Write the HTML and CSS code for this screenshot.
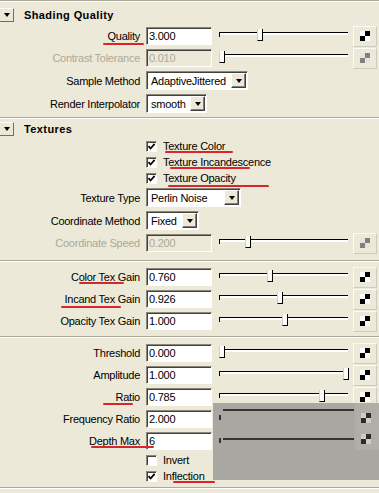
FILE: index.html
```html
<!DOCTYPE html>
<html lang="en">
<head>
    <meta charset="UTF-8">
    <title>Shading Quality</title>
    <link rel="stylesheet" href="styles.css">
</head>
<body>

<div class="panel">
    <div class="sep"></div>

    <!-- Shading Quality -->
    <section class="sec sec-1">
        <div class="head"><span class="toggle"></span><span class="title">Shading Quality</span></div>
        <div class="row">
            <span class="lbl">Quality</span>
            <span class="field">3.000</span>
            <div class="slider"><i class="thumb" style="left:38px"></i></div>
            <span class="map"></span>
        </div>
        <div class="row off">
            <span class="lbl">Contrast Tolerance</span>
            <span class="field">0.010</span>
            <div class="slider"><i class="thumb" style="left:0px"></i></div>
            <span class="map"></span>
        </div>
        <div class="row row-drop">
            <span class="lbl">Sample Method</span>
            <span class="drop drop-sample"><span class="val">AdaptiveJittered</span><span class="arrow"></span></span>
        </div>
        <div class="row row-drop">
            <span class="lbl">Render Interpolator</span>
            <span class="drop drop-interp"><span class="val">smooth</span><span class="arrow"></span></span>
        </div>
    </section>

    <div class="sep"></div>

    <!-- Textures -->
    <section class="sec sec-2">
        <div class="head"><span class="toggle"></span><span class="title">Textures</span></div>
        <div class="row row-check">
            <span class="box"><svg viewBox="0 0 9 9"><polyline points="1.5,4.2 3.6,6.5 7.6,1.8"/></svg></span>
            <span class="txt">Texture Color</span>
        </div>
        <div class="row row-check">
            <span class="box"><svg viewBox="0 0 9 9"><polyline points="1.5,4.2 3.6,6.5 7.6,1.8"/></svg></span>
            <span class="txt">Texture Incandescence</span>
        </div>
        <div class="row row-check">
            <span class="box"><svg viewBox="0 0 9 9"><polyline points="1.5,4.2 3.6,6.5 7.6,1.8"/></svg></span>
            <span class="txt">Texture Opacity</span>
        </div>
        <div class="row row-drop">
            <span class="lbl">Texture Type</span>
            <span class="drop drop-type"><span class="val">Perlin Noise</span><span class="arrow"></span></span>
        </div>
        <div class="row row-drop">
            <span class="lbl">Coordinate Method</span>
            <span class="drop drop-coord"><span class="val">Fixed</span><span class="arrow"></span></span>
        </div>
        <div class="row off">
            <span class="lbl">Coordinate Speed</span>
            <span class="field">0.200</span>
            <div class="slider"><i class="thumb" style="left:26px"></i></div>
            <span class="map"></span>
        </div>
    </section>

    <div class="sep"></div>

    <section class="sec sec-3">
        <div class="row">
            <span class="lbl">Color Tex Gain</span>
            <span class="field">0.760</span>
            <div class="slider"><i class="thumb" style="left:48px"></i></div>
            <span class="map"></span>
        </div>
        <div class="row">
            <span class="lbl">Incand Tex Gain</span>
            <span class="field">0.926</span>
            <div class="slider"><i class="thumb" style="left:58px"></i></div>
            <span class="map"></span>
        </div>
        <div class="row">
            <span class="lbl">Opacity Tex Gain</span>
            <span class="field">1.000</span>
            <div class="slider"><i class="thumb" style="left:63px"></i></div>
            <span class="map"></span>
        </div>
    </section>

    <div class="sep"></div>

    <section class="sec sec-4">
        <div class="row">
            <span class="lbl">Threshold</span>
            <span class="field">0.000</span>
            <div class="slider"><i class="thumb" style="left:0px"></i></div>
            <span class="map"></span>
        </div>
        <div class="row">
            <span class="lbl">Amplitude</span>
            <span class="field">1.000</span>
            <div class="slider"><i class="thumb" style="left:124px"></i></div>
            <span class="map"></span>
        </div>
        <div class="row">
            <span class="lbl">Ratio</span>
            <span class="field">0.785</span>
            <div class="slider"><i class="thumb" style="left:100px"></i></div>
            <span class="map"></span>
        </div>
        <div class="row">
            <span class="lbl">Frequency Ratio</span>
            <span class="field">2.000</span>
            <div class="slider"><i class="thumb" style="left:30px"></i></div>
            <span class="map"></span>
        </div>
        <div class="row">
            <span class="lbl">Depth Max</span>
            <span class="field">6</span>
            <div class="slider"><i class="thumb" style="left:0px"></i></div>
            <span class="map"></span>
        </div>
        <div class="row row-check">
            <span class="box"></span>
            <span class="txt">Invert</span>
        </div>
        <div class="row row-check">
            <span class="box"><svg viewBox="0 0 9 9"><polyline points="1.5,4.2 3.6,6.5 7.6,1.8"/></svg></span>
            <span class="txt">Inflection</span>
        </div>
    </section>

    <div class="sep"></div>

    <!-- window lying over the bottom right -->
    <div class="ghost">
        <span class="ghost-col"></span>
        <span class="ghost-line g1"></span>
        <span class="ghost-line g2"></span>
        <span class="ghost-tick t1"></span>
        <span class="ghost-tick t2"></span>
        <span class="ghost-icon i1"></span>
        <span class="ghost-icon i2"></span>
    </div>

    <!-- red pen marks -->
    <span class="ink ink-q"></span>
    <span class="ink ink-tc"></span>
    <span class="ink ink-ti"></span>
    <span class="ink ink-to"></span>
    <span class="ink ink-ctg"></span>
    <span class="ink ink-itg"></span>
    <span class="ink ink-ratio"></span>
    <span class="ink ink-depth"></span>
    <span class="ink ink-infl"></span>
</div>

</body>
</html>
```

FILE: styles.css
```css
/* Global */
* {
    box-sizing: border-box;
}

body {
    margin: 0;
    background: #ece9d8;
    font-family: "Liberation Sans", Arial, sans-serif;
    font-size: 11px;
    letter-spacing: -0.25px;
    color: #000;
}

.panel {
    position: relative;
    width: 379px;
    height: 493px;
    overflow: hidden;
}

/* Separators */
.sep {
    height: 2px;
    border-top: 1px solid #aca899;
    border-bottom: 1px solid #fff;
}

.sec-1 { padding: 3px 0 2px; }
.sec-2 { padding: 0 0 6px; }
.sec-3 { padding: 4px 0; }
.sec-4 { padding: 4px 0 3px; }

/* Section header */
.head {
    display: flex;
    align-items: center;
    height: 20px;
}

.sec-2 .head {
    height: 19px;
}

.toggle {
    width: 15px;
    height: 14px;
    margin-left: -1px;
    border: 1px solid;
    border-color: #fff #716f64 #716f64 #fff;
    display: flex;
    align-items: center;
    justify-content: center;
}

.toggle::after {
    content: "";
    border-left: 3px solid transparent;
    border-right: 3px solid transparent;
    border-top: 4px solid #000;
}

.title {
    margin-left: 10px;
    font-weight: bold;
    letter-spacing: 0.4px;
}

/* Rows */
.row {
    display: flex;
    align-items: center;
    height: 22px;
}

.row-drop {
    height: 23px;
}

.row-check {
    height: 16px;
    padding-left: 146px;
}

.lbl {
    width: 140px;
    text-align: right;
    white-space: nowrap;
}

.off .lbl,
.off .field {
    color: #aca899;
}

/* Text field */
.field {
    width: 66px;
    height: 18px;
    margin-left: 6px;
    padding-left: 2px;
    line-height: 16px;
    background: #fff;
    border: 1px solid;
    border-color: #8a887c #fff #fff #8a887c;
    box-shadow: inset 1px 1px 0 #404040;
}

.off .field {
    background: #ece9d8;
}

/* Slider */
.slider {
    position: relative;
    width: 129px;
    height: 22px;
    margin-left: 7px;
}

.slider::before {
    content: "";
    position: absolute;
    left: 0;
    right: 0;
    top: 7px;
    height: 1px;
    background: #000;
    box-shadow: 0 1px 0 #fff, 0 2px 0 #fff;
}

.slider::after {
    content: "";
    position: absolute;
    left: 0;
    top: 7px;
    width: 1px;
    height: 5px;
    background: #000;
}

.thumb {
    position: absolute;
    top: 4px;
    width: 6px;
    height: 12px;
    background: #fbfbf8;
    border-right: 1px solid #000;
    border-bottom: 1px solid #000;
    border-left: 1px solid #d4d0c8;
    z-index: 1;
}

/* Map button */
.map {
    width: 24px;
    height: 21px;
    margin-left: 5px;
    border: 1px solid;
    border-color: #fbfaf6 #cfccbf #cfccbf #fbfaf6;
    display: flex;
    align-items: center;
    justify-content: center;
}

.map::after {
    content: "";
    width: 10px;
    height: 10px;
    background: conic-gradient(#000 0 25%, #fff 0 50%, #000 0 75%, #fff 0);
}

.off .map::after {
    background: conic-gradient(#808080 0 25%, #e6e4dc 0 50%, #808080 0 75%, #e6e4dc 0);
}

/* Dropdown */
.drop {
    display: flex;
    align-items: center;
    height: 19px;
    margin-left: 6px;
    padding-right: 1px;
    background: #fff;
    border: 1px solid;
    border-color: #8a887c #fff #fff #8a887c;
    box-shadow: inset 1px 1px 0 #404040;
}

.drop .val {
    flex: 1;
    padding-left: 4px;
    white-space: nowrap;
    overflow: hidden;
}

.arrow {
    width: 15px;
    height: 15px;
    background: #ece9d8;
    border: 1px solid;
    border-color: #fff #404040 #404040 #fff;
    box-shadow: inset -1px -1px 0 #808080;
    display: flex;
    align-items: center;
    justify-content: center;
}

.arrow::after {
    content: "";
    border-left: 3.5px solid transparent;
    border-right: 3.5px solid transparent;
    border-top: 4px solid #000;
}

.drop-sample { width: 102px; }
.drop-interp { width: 61px; }
.drop-type { width: 95px; }
.drop-coord { width: 53px; }

/* Checkbox */
.box {
    width: 11px;
    height: 11px;
    background: #fff;
    border: 1px solid;
    border-color: #8a887c #fff #fff #8a887c;
    box-shadow: inset 1px 1px 0 #404040;
    display: flex;
    align-items: center;
    justify-content: center;
}

.box svg {
    width: 9px;
    height: 9px;
    fill: none;
    stroke: #000;
    stroke-width: 1.8;
}

.txt {
    margin-left: 6px;
    white-space: nowrap;
}

/* Grey window lying over the panel */
.ghost {
    position: absolute;
    left: 213px;
    top: 403px;
    width: 166px;
    height: 77px;
    background: #a9a7a2;
    z-index: 2;
}

.ghost-col {
    position: absolute;
    left: 142px;
    top: 0;
    width: 24px;
    height: 47px;
    background: #b0aea8;
}

.ghost-line {
    position: absolute;
    left: 10px;
    width: 131px;
    height: 2px;
    background: #333;
}

.g1 { top: 6px; }
.g2 { top: 35px; }

.ghost-tick {
    position: absolute;
    left: 6px;
    width: 2px;
    height: 5px;
    background: #333;
}

.t1 { top: 12px; }
.t2 { top: 35px; }

.ghost-icon {
    position: absolute;
    left: 148px;
    width: 10px;
    height: 10px;
    background: conic-gradient(#2c2c2c 0 25%, #cfcdc6 0 50%, #2c2c2c 0 75%, #cfcdc6 0);
}

.i1 { top: 10px; }
.i2 { top: 31px; }

/* Red pen marks */
.ink {
    position: absolute;
    height: 2px;
    background: #d9262b;
    border-radius: 1px;
    z-index: 3;
}

.ink-q { left: 103px; top: 43px; width: 41px; }
.ink-tc { left: 165px; top: 151px; width: 68px; }
.ink-ti { left: 170px; top: 167px; width: 80px; }
.ink-to { left: 168px; top: 185px; width: 101px; }
.ink-ctg { left: 79px; top: 282px; width: 45px; }
.ink-itg { left: 61px; top: 306px; width: 60px; }
.ink-ratio { left: 103px; top: 403px; width: 30px; }
.ink-depth { left: 91px; top: 446px; width: 63px; }
.ink-infl { left: 173px; top: 481px; width: 42px; }
```
